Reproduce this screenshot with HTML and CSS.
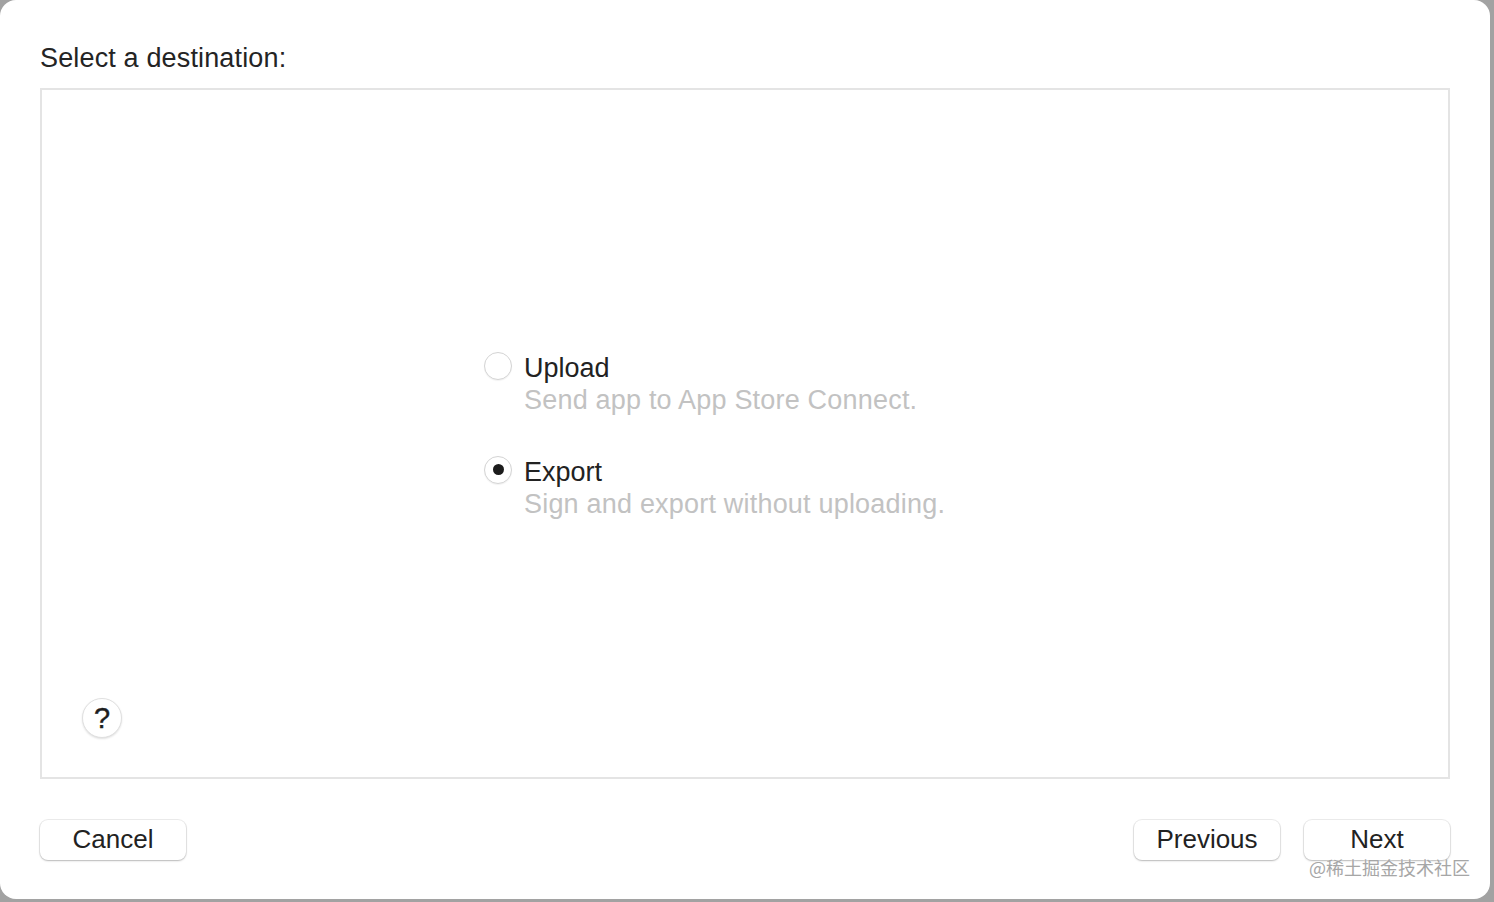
FILE: index.html
```html
<!DOCTYPE html>
<html lang="en">
<head>
    <meta charset="UTF-8">
    <title>Select a destination</title>
    <link rel="stylesheet" href="styles.css">
</head>
<body>
    <div class="window">
        <div class="title">Select a destination:</div>

        <div class="panel">
            <div class="options">
                <div class="option">
                    <span class="radio"></span>
                    <div class="option-text">
                        <div class="option-label">Upload</div>
                        <div class="option-desc">Send app to App Store Connect.</div>
                    </div>
                </div>
                <div class="option">
                    <span class="radio checked"></span>
                    <div class="option-text">
                        <div class="option-label">Export</div>
                        <div class="option-desc">Sign and export without uploading.</div>
                    </div>
                </div>
            </div>
            <div class="help-row">
                <button class="help-btn">?</button>
            </div>
        </div>

        <div class="footer">
            <button class="btn">Cancel</button>
            <div class="footer-right">
                <button class="btn">Previous</button>
                <button class="btn">Next</button>
            </div>
        </div>

        <div class="watermark">@稀土掘金技术社区</div>
    </div>
</body>
</html>
```

FILE: styles.css
```css
body {
    margin: 0;
    background: #a2a2a2;
    font-family: "Liberation Sans", Arial, sans-serif;
    color: #242424;
}

.window {
    position: relative;
    width: 1490px;
    height: 899px;
    box-sizing: border-box;
    background: #fff;
    border-radius: 16px;
    padding: 43px 40px 0 40px;
    display: flex;
    flex-direction: column;
}

.title {
    font-size: 27px;
    line-height: 30px;
    letter-spacing: 0.15px;
    margin-bottom: 15px;
}

.panel {
    height: 691px;
    box-sizing: border-box;
    border: 2px solid #e4e4e4;
    display: grid;
    grid-template-rows: 1fr auto 1fr;
}

.options {
    grid-row: 2;
    padding-left: 442px;
    margin-top: 4px;
    display: flex;
    flex-direction: column;
    gap: 40px;
}

.option {
    display: flex;
    gap: 12px;
}

.radio {
    width: 28px;
    height: 28px;
    box-sizing: border-box;
    border-radius: 50%;
    border: 1px solid #d4d4d4;
    background: #fff;
    box-shadow: 0 1px 1px rgba(0, 0, 0, 0.05);
    display: flex;
    align-items: center;
    justify-content: center;
    flex-shrink: 0;
}

.radio.checked::after {
    content: "";
    width: 11px;
    height: 11px;
    border-radius: 50%;
    background: #1c1c1c;
}

.option-label,
.option-desc {
    font-size: 27px;
    line-height: 32px;
}

.option-label {
    color: #222;
}

.option-desc {
    color: #c2c2c2;
    letter-spacing: 0.2px;
}

.help-row {
    grid-row: 3;
    display: flex;
    align-items: flex-end;
    padding: 0 0 39px 40px;
}

.help-btn {
    width: 40px;
    height: 40px;
    border-radius: 50%;
    border: 1px solid #e0e0e0;
    background: #fff;
    box-shadow: 0 1px 2px rgba(0, 0, 0, 0.12);
    font-family: "Liberation Sans", Arial, sans-serif;
    font-size: 29px;
    color: #1e1e1e;
    -webkit-text-stroke: 0.4px #1e1e1e;
    padding: 0;
    display: flex;
    align-items: center;
    justify-content: center;
}

.footer {
    display: flex;
    justify-content: space-between;
    margin-top: 41px;
}

.footer-right {
    display: flex;
    gap: 24px;
}

.btn {
    width: 146px;
    height: 40px;
    border: none;
    border-radius: 8px;
    background: #fff;
    box-shadow: 0 0 0 1px rgba(0, 0, 0, 0.07), 0 1px 2px rgba(0, 0, 0, 0.22);
    font-family: "Liberation Sans", Arial, sans-serif;
    font-size: 26px;
    color: #222;
    padding: 0 0 2px 0;
}

.watermark {
    position: absolute;
    right: 20px;
    bottom: 22px;
    font-family: "Noto Sans CJK SC", sans-serif;
    font-size: 18px;
    line-height: 20px;
    color: #a6a6a6;
    text-shadow: 0 0 2px #fff;
}
```
